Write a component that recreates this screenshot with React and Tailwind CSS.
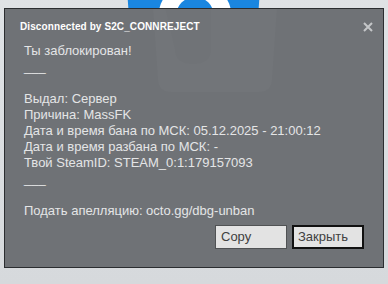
import React from 'react';

const lines = [
    'Ты заблокирован!',
    '___',
    '',
    'Выдал: Сервер',
    'Причина: MassFK',
    'Дата и время бана по МСК: 05.12.2025 - 21:00:12',
    'Дата и время разбана по МСК: -',
    'Твой SteamID: STEAM_0:1:179157093',
    '___',
    '',
    'Подать апелляцию: octo.gg/dbg-unban',
];

const Logo = () => (
    <svg className="absolute left-[125px] top-[-40px]" width="137" height="150" viewBox="0 0 137 150">
        <path d="M0 0 H137 L128 130 Q127 148 110 148 H28 Q10 148 9 130 Z" fill="#1a86e0" />
        <circle cx="70" cy="58" r="37" fill="#fff" />
        <circle cx="70" cy="56" r="19" fill="#1a86e0" />
    </svg>
);

const App = () => {
    return (
        <div className="relative w-[388px] h-[284px] overflow-hidden bg-gradient-to-b from-[#dfe2e5] to-[#d6d9dc] pt-2 px-1" style={{ fontFamily: '"Liberation Sans", Arial, sans-serif' }}>
            <Logo />
            <div className="relative w-[380px] h-[260px] border border-[#2b2d30] bg-[#6f7276] overflow-hidden">
                {/* faint logo showing through */}
                <svg className="absolute left-[148px] top-[-1px]" width="124" height="85" viewBox="0 0 124 85">
                    <path d="M0 0 H124 L119 72 Q118 84 106 84 H18 Q6 84 5 72 Z" fill="#ffffff" opacity="0.025" />
                    <path d="M12 0 H58 V42 Q58 56 40 56 Q22 56 22 42 Z" fill="#000000" opacity="0.015" />
                </svg>

                <div className="relative flex items-center justify-between pl-[15px] pr-[10px] pt-[9px] h-[25px]">
                    <span className="text-[10px] font-bold text-white tracking-[0.1px]">
                        Disconnected by S2C_CONNREJECT
                    </span>
                    <svg width="10" height="10" viewBox="0 0 10 10" className="mt-[1px]">
                        <path d="M1 1 L9 9 M9 1 L1 9" stroke="#c4c6c8" strokeWidth="2" />
                    </svg>
                </div>

                <div className="relative pl-[19px] pt-[9px] text-[13px] leading-[16px] text-[#e4e5e6] whitespace-pre">
                    {lines.map((line, i) => (
                        <div key={i} className="h-[16px]">{line}</div>
                    ))}
                </div>

                <div className="relative flex justify-end gap-[5px] pr-[19px] pt-[6px]">
                    <button className="w-[72px] h-[24px] border border-[#505254] bg-[#e3e3e3] text-left pl-[5px] text-[13px] text-[#404040]">
                        Copy
                    </button>
                    <button className="w-[72px] h-[24px] border-2 border-[#111] bg-[#e3e3e3] text-left pl-[4px] text-[13px] text-[#404040]">
                        Закрыть
                    </button>
                </div>
            </div>
        </div>
    );
};

export default App;
